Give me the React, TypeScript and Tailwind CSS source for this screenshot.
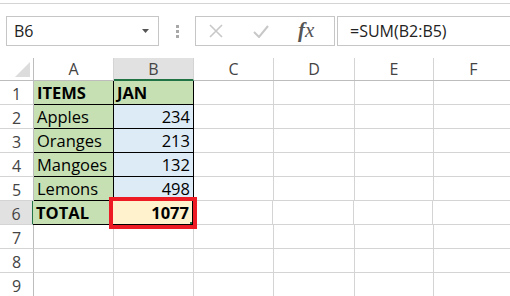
import React from "react";

const cols = [
  { name: "A", w: "w-[80px]" },
  { name: "B", w: "w-[80px]" },
  { name: "C", w: "w-[80px]" },
  { name: "D", w: "w-[81px]" },
  { name: "E", w: "w-[79px]" },
  { name: "F", w: "w-[80px]" },
];

const data = [
  { item: "ITEMS", jan: "JAN", head: true },
  { item: "Apples", jan: "234" },
  { item: "Oranges", jan: "213" },
  { item: "Mangoes", jan: "132" },
  { item: "Lemons", jan: "498" },
  { item: "TOTAL", jan: "1077", total: true },
];

function Toolbar() {
  return (
    <div className="h-[58px] shrink-0">
      <div className="h-[3px]" />
      <div className="h-px bg-[#d4d4d4]" />
      <div className="flex items-center pt-[12px] pl-[6px]">
        <div className="relative flex h-[30px] w-[153px] items-center border border-[#c6c6c6] pl-[7px] text-[16px] text-[#222]">
          B6
          <svg className="absolute right-[9px] top-[12px]" width="7" height="4" viewBox="0 0 7 4">
            <path d="M0 0h7L3.5 4z" fill="#555" />
          </svg>
        </div>
        <div className="ml-[17px] flex flex-col gap-[2px]">
          <div className="h-[3px] w-[3px] bg-[#a8a8a8]" />
          <div className="h-[3px] w-[3px] bg-[#a8a8a8]" />
          <div className="h-[3px] w-[3px] bg-[#a8a8a8]" />
        </div>
        <div className="ml-[16px] flex h-[30px] w-[140px] items-center border border-[#c6c6c6]">
          <svg className="ml-[13px]" width="14" height="14" viewBox="0 0 14 14">
            <path d="M1 1l12 12M13 1L1 13" stroke="#c8c8c8" strokeWidth="1.6" />
          </svg>
          <svg className="ml-[30px]" width="16" height="13" viewBox="0 0 16 13">
            <path d="M1 7l5 5L15 1" stroke="#c8c8c8" strokeWidth="2" fill="none" />
          </svg>
          <span
            className="ml-[29px] text-[21px] italic text-[#555]"
            style={{ fontFamily: '"Liberation Serif", serif' }}
          >
            <span className="font-bold">f</span>x
          </span>
        </div>
        <div className="ml-[2px] flex h-[30px] flex-1 items-center border border-r-0 border-[#c6c6c6] pl-[12px] text-[16px] text-[#222]">
          =SUM(B2:B5)
        </div>
      </div>
    </div>
  );
}

function HeaderRow() {
  return (
    <div className="flex h-[23px] border-b border-[#bdbdbd]">
      <div className="relative w-[34px] shrink-0 border-r border-[#bdbdbd]">
        <svg className="absolute right-[3px] bottom-[3px]" width="15" height="15" viewBox="0 0 15 15">
          <path d="M15 0V15H0z" fill="#dcdcdc" />
        </svg>
      </div>
      {cols.map((c) => (
        <div
          key={c.name}
          className={`${c.w} shrink-0 border-r border-[#d4d4d4] flex items-center justify-center text-[16px] text-[#444] ${
            c.name === "B" ? "bg-[#e1e1e1] border-b-2 border-b-[#217346] -mb-px" : ""
          }`}
        >
          {c.name}
        </div>
      ))}
    </div>
  );
}

function Row({ n }: { n: number }) {
  const d = data[n - 1];
  const sel = n === 6;
  return (
    <div className="flex h-[24px] shrink-0">
      <div
        className={`w-[34px] shrink-0 flex items-center justify-center border-b border-[#d4d4d4] pt-[2px] text-[16px] text-[#444] ${
          sel ? "bg-[#e1e1e1] border-r-2 border-r-[#217346]" : "border-r border-r-[#bdbdbd]"
        }`}
      >
        {n}
      </div>
      {cols.map((c) => {
        if (d && c.name === "A") {
          return (
            <div
              key={c.name}
              className={`${c.w} shrink-0 bg-[#c6e0b4] border-r border-b border-black flex items-center pl-[3px] pt-[2px] text-[16.5px] text-black ${
                d.head || d.total ? "font-bold" : ""
              } ${sel ? "-ml-px" : ""}`}
            >
              {d.item}
            </div>
          );
        }
        if (d && c.name === "B") {
          return (
            <div
              key={c.name}
              className={`relative ${c.w} shrink-0 border-r border-b border-black flex items-center pt-[2px] text-[16.5px] text-black ${
                d.head
                  ? "bg-[#c6e0b4] pl-[3px] font-bold"
                  : d.total
                  ? "bg-[#fff2cc] justify-end pr-[3px] font-bold"
                  : "bg-[#ddebf7] justify-end pr-[3px]"
              }`}
            >
              {d.jan}
              {d.total && (
                <>
                  <div className="absolute left-[-4px] top-[-4px] right-[-5px] bottom-[-5px] border-4 border-[#ed1c24]" />
                  <div className="absolute right-0 bottom-0 h-[2px] w-[2px] bg-[#217346]" />
                </>
              )}
            </div>
          );
        }
        return (
          <div key={c.name} className={`${c.w} shrink-0 border-r border-b border-[#d4d4d4]`} />
        );
      })}
    </div>
  );
}

export default function App() {
  return (
    <div
      className="flex h-[296px] w-[510px] flex-col overflow-hidden bg-white"
      style={{ fontFamily: '"Open Sans", "Noto Sans", sans-serif' }}
    >
      <Toolbar />
      <HeaderRow />
      {[1, 2, 3, 4, 5, 6, 7, 8, 9].map((n) => (
        <Row key={n} n={n} />
      ))}
    </div>
  );
}
